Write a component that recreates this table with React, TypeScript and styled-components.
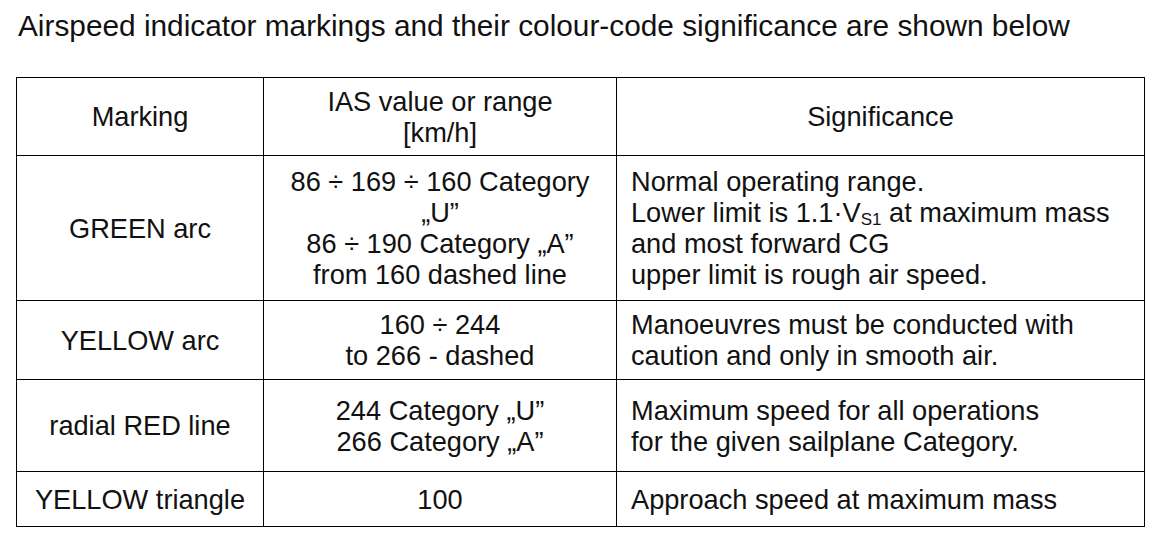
import React from "react";
import styled, { createGlobalStyle } from "styled-components";

const Global = createGlobalStyle`
  html, body { margin: 0; padding: 0; background: #fff; }
  body { font-family: "Liberation Sans", Arial, sans-serif; color: #111; }
`;

const Page = styled.div`
  padding: 10px 0 0 16px;
  width: 1157px;
  box-sizing: border-box;
`;

const Title = styled.h1`
  margin: 0 0 36px 2px;
  font-size: 29.8px;
  line-height: 31px;
  font-weight: normal;
  white-space: nowrap;
`;

const Table = styled.table`
  border-collapse: collapse;
  table-layout: fixed;
  font-size: 27.2px;
  line-height: 31px;
`;

const Row = styled.tr<{ $h: number }>`
  height: ${(p) => p.$h}px;
`;

const Cell = styled.td<{ $left?: boolean }>`
  border: 1.5px solid #000;
  padding: 0 ${(p) => (p.$left ? "0 0 14px" : "0")};
  text-align: ${(p) => (p.$left ? "left" : "center")};
  vertical-align: middle;
  white-space: nowrap;
`;

const Sub = styled.sub`
  font-size: 17px;
  vertical-align: -3px;
  line-height: 0;
`;

export default function App() {
  return (
    <>
      <Global />
      <Page>
        <Title>Airspeed indicator markings and their colour-code significance are shown below</Title>
        <Table>
          <colgroup>
            <col style={{ width: 247 }} />
            <col style={{ width: 353 }} />
            <col style={{ width: 528 }} />
          </colgroup>
          <tbody>
            <Row $h={78}>
              <Cell>Marking</Cell>
              <Cell>
                IAS value or range
                <br />
                [km/h]
              </Cell>
              <Cell>Significance</Cell>
            </Row>
            <Row $h={145}>
              <Cell>GREEN arc</Cell>
              <Cell>
                86 ÷ 169 ÷ 160 Category
                <br />„U”
                <br />
                86 ÷ 190 Category „A”
                <br />
                from 160 dashed line
              </Cell>
              <Cell $left>
                Normal operating range.
                <br />
                Lower limit is 1.1·V<Sub>S1</Sub> at maximum mass
                <br />
                and most forward CG
                <br />
                upper limit is rough air speed.
              </Cell>
            </Row>
            <Row $h={79}>
              <Cell>YELLOW arc</Cell>
              <Cell>
                160 ÷ 244
                <br />
                to 266 - dashed
              </Cell>
              <Cell $left>
                Manoeuvres must be conducted with
                <br />
                caution and only in smooth air.
              </Cell>
            </Row>
            <Row $h={92}>
              <Cell>radial RED line</Cell>
              <Cell>
                244 Category „U”
                <br />
                266 Category „A”
              </Cell>
              <Cell $left>
                Maximum speed for all operations
                <br />
                for the given sailplane Category.
              </Cell>
            </Row>
            <Row $h={55}>
              <Cell>YELLOW triangle</Cell>
              <Cell>100</Cell>
              <Cell $left>Approach speed at maximum mass</Cell>
            </Row>
          </tbody>
        </Table>
      </Page>
    </>
  );
}
